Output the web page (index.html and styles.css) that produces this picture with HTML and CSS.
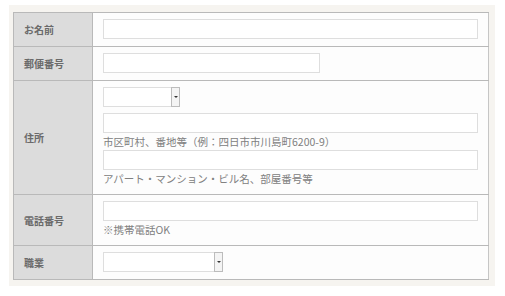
FILE: index.html
```html
<!DOCTYPE html>
<html lang="ja">
<head>
    <meta charset="UTF-8">
    <title>お問い合わせフォーム</title>
    <link rel="stylesheet" href="styles.css">
</head>
<body>
    <div class="form-wrap">
        <table class="form-table">
            <tr>
                <th>お名前</th>
                <td><input type="text" class="input input-full"></td>
            </tr>
            <tr>
                <th>郵便番号</th>
                <td><input type="text" class="input input-zip"></td>
            </tr>
            <tr>
                <th>住所</th>
                <td class="address">
                    <div class="select select-pref"><span class="select-btn"></span></div>
                    <input type="text" class="input input-full input-addr">
                    <p class="note">市区町村、番地等（例：四日市市川島町6200-9）</p>
                    <input type="text" class="input input-full">
                    <p class="note">アパート・マンション・ビル名、部屋番号等</p>
                </td>
            </tr>
            <tr>
                <th>電話番号</th>
                <td class="tel">
                    <input type="text" class="input input-full">
                    <p class="note">※携帯電話OK</p>
                </td>
            </tr>
            <tr>
                <th>職業</th>
                <td><div class="select select-job"><span class="select-btn"></span></div></td>
            </tr>
        </table>
    </div>
</body>
</html>
```

FILE: styles.css
```css
body {
    margin: 0;
    background-color: #fff;
    font-family: "Noto Sans CJK JP", "Noto Sans", sans-serif;
    color: #666;
}
.form-wrap {
    width: 486px;
    box-sizing: border-box;
    margin: 5px 0 0 9px;
    padding: 7px 6px 6px 4px;
    background-color: #f6f4f0;
}
.form-table {
    width: 476px;
    border-collapse: collapse;
    border: 1px solid #c6c6c6;
    background-color: #fdfdfd;
}
.form-table th {
    width: 68px;
    padding: 0 0 0 10px;
    background-color: #dcdcdc;
    border: 1px solid #b9b9b9;
    text-align: left;
    font-size: 10px;
    font-weight: bold;
    color: #6a6a6a;
}
.form-table td {
    padding: 6px 10px 7px;
    border-top: 1px solid #b9b9b9;
    border-bottom: 1px solid #b9b9b9;
}
.input {
    display: block;
    height: 20px;
    box-sizing: border-box;
    margin: 0;
    border: 1px solid #dedede;
    background-color: #fff;
}
.input-full {
    width: 375px;
}
.input-zip {
    width: 217px;
}
.input-addr {
    margin-top: 6px;
}
.note {
    margin: 0;
    height: 17px;
    line-height: 17px;
    font-size: 10.5px;
    color: #808080;
}
.address {
    padding-bottom: 4px;
}
.tel {
    padding-bottom: 6px;
}
.select {
    position: relative;
    height: 20px;
    box-sizing: border-box;
    border: 1px solid #dedede;
    background-color: #fff;
}
.select-pref {
    width: 77px;
}
.select-job {
    width: 120px;
}
.select-btn {
    position: absolute;
    top: -1px;
    right: -1px;
    width: 9px;
    height: 20px;
    box-sizing: border-box;
    border: 1px solid #bcbcbc;
    background-color: #f4f4f4;
}
.select-btn::after {
    content: "";
    position: absolute;
    left: 2px;
    top: 8px;
    border-left: 2px solid transparent;
    border-right: 2px solid transparent;
    border-top: 2px solid #333;
}
```
